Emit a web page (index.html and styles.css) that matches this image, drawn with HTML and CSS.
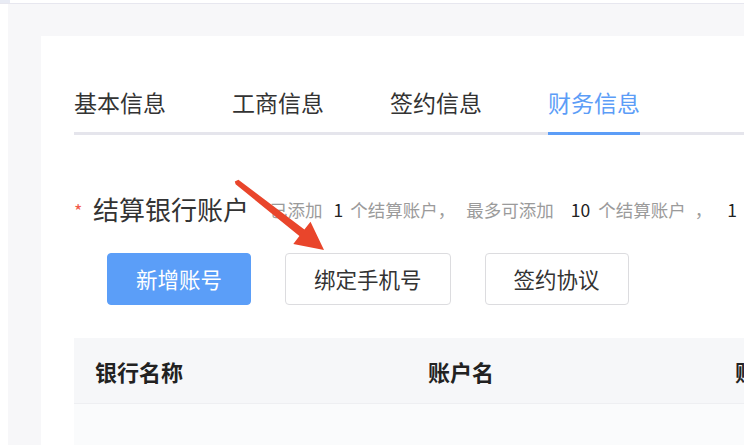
FILE: index.html
```html
<!DOCTYPE html>
<html lang="zh-CN">
<head>
<meta charset="utf-8">
<title>财务信息</title>
<link rel="stylesheet" href="styles.css">
</head>
<body>
<div class="topbar"><span class="topbar-tab"></span></div>
<div class="layout">
  <aside class="rail"></aside>
  <main class="stage">
    <section class="card">
      <nav class="tabs">
        <span class="tab">基本信息</span>
        <span class="tab">工商信息</span>
        <span class="tab">签约信息</span>
        <span class="tab active">财务信息</span>
      </nav>
      <div class="section-head">
        <span class="required">*</span>
        <h2 class="section-title">结算银行账户</h2>
        <p class="hint">已添加<b class="num n1">1</b>个结算账户，<span class="sep"></span>最多可添加<b class="num n10">10</b>个结算账户<span class="sep-sm"></span>，<b class="num n-last">1</b></p>
      </div>
      <div class="actions">
        <button class="btn btn-primary">新增账号</button>
        <button class="btn">绑定手机号</button>
        <button class="btn">签约协议</button>
      </div>
      <div class="table">
        <div class="thead">
          <div class="th th-bank">银行名称</div>
          <div class="th th-name">账户名</div>
          <div class="th">账户</div>
        </div>
        <div class="tbody"></div>
      </div>
    </section>
  </main>
</div>
<svg class="annot-arrow" width="744" height="445" viewBox="0 0 744 445" aria-hidden="true">
  <polygon fill="#e9452b" points="238.4,179.8 304.4,229.6 310.5,221.7 324,250 293.3,243.9 299.4,236 235.6,184.2 234.8,181.4"/>
</svg>
</body>
</html>
```

FILE: styles.css
```css
* { box-sizing: border-box; }
html, body { margin: 0; padding: 0; }
body {
  width: 744px;
  height: 445px;
  overflow: hidden;
  background: #fff;
  font-family: "Noto Sans CJK SC", "Noto Sans", "Liberation Sans", sans-serif;
  color: #333;
  display: flex;
  flex-direction: column;
  position: relative;
}
.topbar {
  height: 4px;
  flex: none;
  border-bottom: 1px solid #e7e7ef;
  display: flex;
}
.topbar-tab {
  width: 10px;
  height: 3px;
  background: #e8ebf4;
}
.layout {
  flex: 1;
  display: flex;
  min-height: 0;
}
.rail {
  width: 8px;
  flex: none;
  background: #fff;
}
.stage {
  flex: 1;
  background: #f7f7f9;
  padding: 32px 0 0 33px;
  display: flex;
  min-width: 0;
}
.card {
  flex: 1;
  background: #fff;
  padding: 51px 0 0 33px;
  overflow: hidden;
  min-width: 0;
}
.tabs {
  display: flex;
  gap: 66px;
  border-bottom: 3px solid #e5e5ec;
  white-space: nowrap;
}
.tab {
  font-size: 23px;
  line-height: 30px;
  padding-bottom: 15px;
  margin-bottom: -3px;
  border-bottom: 3px solid transparent;
  color: #333;
}
.tab.active {
  color: #5c9df7;
  border-bottom-color: #5c9df7;
}
.section-head {
  margin-top: 57px;
  display: flex;
  align-items: center;
  white-space: nowrap;
  height: 34px;
}
.required {
  color: #f25a4a;
  font-size: 18px;
  line-height: 18px;
  width: 19px;
  align-self: flex-start;
  margin-top: 9px;
}
.section-title {
  margin: 0;
  font-size: 26px;
  line-height: 34px;
  font-weight: 400;
  color: #333;
}
.hint {
  margin: 0 0 0 21px;
  font-size: 17.5px;
  line-height: 34px;
  color: #9b9b9b;
  padding-top: 2px;
}
.num {
  font-weight: 400;
  color: #222;
}
.n1 { margin: 0 7px 0 11px; }
.n10 { margin: 0 8px 0 17px; }
.n-last { margin-left: 15px; }
.sep { display: inline-block; width: 11px; }
.sep-sm { display: inline-block; width: 9px; }
.actions {
  margin-top: 27px;
  display: flex;
  gap: 34px;
  padding-left: 33px;
}
.btn {
  height: 52px;
  padding: 0 28px;
  border: 1px solid #dcdcdf;
  border-radius: 4px;
  background: #fff;
  color: #333;
  font-family: inherit;
  font-size: 21.5px;
  line-height: 50px;
}
.btn-primary {
  background: #5b9ef8;
  border-color: #5b9ef8;
  color: #fff;
}
.table {
  margin-top: 33px;
  width: 760px;
}
.thead {
  display: flex;
  height: 66px;
  align-items: center;
  background: #f6f7f9;
  border-bottom: 1px solid #eeeff2;
  padding-left: 21px;
}
.th {
  font-size: 22px;
  font-weight: 700;
  color: #222;
  white-space: nowrap;
}
.th-bank { width: 333px; }
.th-name { width: 307px; }
.tbody {
  height: 60px;
  background: #fafbfc;
}
.annot-arrow {
  position: absolute;
  left: 0;
  top: 0;
  pointer-events: none;
}
```
